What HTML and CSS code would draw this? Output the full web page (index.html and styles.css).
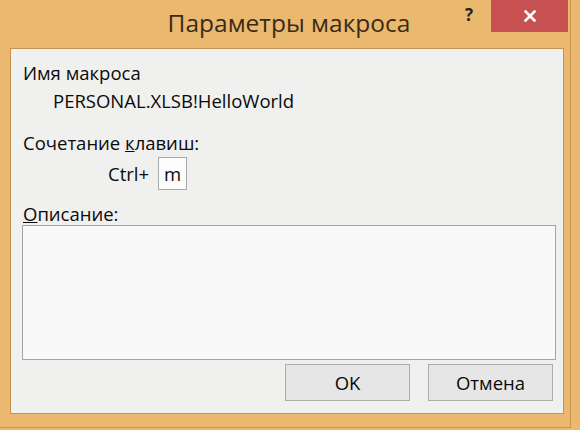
FILE: index.html
```html
<!DOCTYPE html>
<html lang="ru">
  <head>
    <meta charset="UTF-8" />
    <title>Параметры макроса</title>
    <link rel="stylesheet" href="styles.css">
  </head>
  <body>
    <div class="window">
      <div class="titlebar">
        <div></div>
        <h1 class="title">Параметры макроса</h1>
        <div class="caption-buttons">
          <span class="help">?</span>
          <span class="close">
            <svg width="12" height="12" viewBox="0 0 12 12">
              <path d="M1.5 1.5 L10.5 10.5 M10.5 1.5 L1.5 10.5" stroke="#fff" stroke-width="2.6" stroke-linecap="square" />
            </svg>
          </span>
        </div>
      </div>

      <div class="panel">
        <div class="label">Имя макроса</div>
        <div class="macro-name">PERSONAL.XLSB!HelloWorld</div>

        <div class="label shortcut-label">Сочетание <u>к</u>лавиш:</div>
        <div class="shortcut">
          <span class="ctrl">Ctrl+</span>
          <span class="key">m</span>
        </div>

        <div class="label desc-label"><u>О</u>писание:</div>
        <div class="description"></div>

        <div class="actions">
          <button class="btn">OK</button>
          <button class="btn">Отмена</button>
        </div>
      </div>
    </div>
  </body>
</html>
```

FILE: styles.css
```css
:root {
  --frame: #eab86f;
  --frame-dark: #c9964e;
  --panel: #f0f0ef;
  --text: #0a0a0a;
}

body {
  margin: 0;
  background: var(--frame);
  font-family: "Open Sans", "Noto Sans", sans-serif;
  color: var(--text);
}

.window {
  width: 570px;
  height: 427px;
  border-right: 1px solid var(--frame-dark);
  border-bottom: 1px solid var(--frame-dark);
  display: flex;
  flex-direction: column;
}

/* title bar */
.titlebar {
  height: 48px;
  display: grid;
  grid-template-columns: 1fr auto 1fr;
}

.title {
  margin: 0;
  padding-top: 8px;
  padding-left: 8px;
  font-size: 24.5px;
  font-weight: 400;
  line-height: 30px;
  color: #3a2b14;
}

.caption-buttons {
  display: flex;
  justify-content: flex-end;
  align-items: flex-start;
  margin-right: 2px;
}

.help {
  font-size: 17px;
  font-weight: 700;
  line-height: 30px;
  color: #2b2013;
  margin-right: 18px;
}

.close {
  width: 77px;
  height: 32px;
  background: #c75050;
  display: flex;
  justify-content: center;
  align-items: center;
}

/* client area */
.panel {
  flex: 1;
  margin: 0 6px 13px 10px;
  background: var(--panel);
  border: 1px solid #bf9452;
  padding: 13px 7px 0 11px;
  display: flex;
  flex-direction: column;
  font-size: 18.5px;
  line-height: 22px;
}

.label {
  padding-left: 1px;
}

.macro-name {
  margin-top: 6px;
  padding-left: 31px;
}

.shortcut-label {
  margin-top: 20px;
}

.shortcut {
  margin-top: 3px;
  padding-left: 86px;
  display: flex;
  align-items: center;
  gap: 9px;
}

.key {
  width: 29px;
  height: 33px;
  border: 1px solid #a9a9a9;
  background: #fdfdfd;
  box-sizing: border-box;
  display: flex;
  justify-content: center;
  align-items: center;
}

.desc-label {
  margin-top: 13px;
}

.description {
  height: 135px;
  border: 1px solid #a3a3a3;
  background: #f9f9f9;
  box-sizing: border-box;
}

.actions {
  margin-top: 4px;
  margin-right: 3px;
  display: flex;
  justify-content: flex-end;
  gap: 18px;
}

.btn {
  width: 125px;
  height: 37px;
  border: 1px solid #acacac;
  background: #e6e6e6;
  font-family: inherit;
  font-size: 18.5px;
  color: var(--text);
  padding: 0;
}
```
